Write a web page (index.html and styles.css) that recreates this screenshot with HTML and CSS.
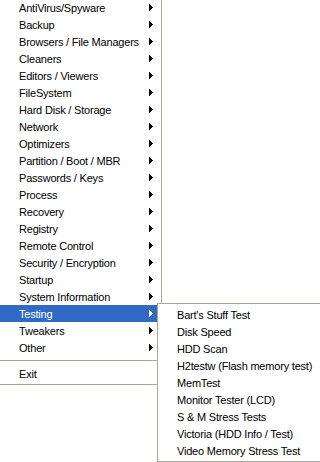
FILE: index.html
```html
<!DOCTYPE html>
<html lang="en">
<head>
    <meta charset="UTF-8">
    <meta name="viewport" content="width=device-width, initial-scale=1.0">
    <title>Tools menu</title>
    <link rel="stylesheet" href="styles.css">
</head>
<body>
    <div class="menu main">
        <div class="item"><span>AntiVirus/Spyware</span><svg class="arrow" width="4" height="7" viewBox="0 0 4 7"><path d="M0 0h1v7h-1zM1 1h1v5h-1zM2 2h1v3h-1zM3 3h1v1h-1z"/></svg></div>
        <div class="item"><span>Backup</span><svg class="arrow" width="4" height="7" viewBox="0 0 4 7"><path d="M0 0h1v7h-1zM1 1h1v5h-1zM2 2h1v3h-1zM3 3h1v1h-1z"/></svg></div>
        <div class="item"><span>Browsers / File Managers</span><svg class="arrow" width="4" height="7" viewBox="0 0 4 7"><path d="M0 0h1v7h-1zM1 1h1v5h-1zM2 2h1v3h-1zM3 3h1v1h-1z"/></svg></div>
        <div class="item"><span>Cleaners</span><svg class="arrow" width="4" height="7" viewBox="0 0 4 7"><path d="M0 0h1v7h-1zM1 1h1v5h-1zM2 2h1v3h-1zM3 3h1v1h-1z"/></svg></div>
        <div class="item"><span>Editors / Viewers</span><svg class="arrow" width="4" height="7" viewBox="0 0 4 7"><path d="M0 0h1v7h-1zM1 1h1v5h-1zM2 2h1v3h-1zM3 3h1v1h-1z"/></svg></div>
        <div class="item"><span>FileSystem</span><svg class="arrow" width="4" height="7" viewBox="0 0 4 7"><path d="M0 0h1v7h-1zM1 1h1v5h-1zM2 2h1v3h-1zM3 3h1v1h-1z"/></svg></div>
        <div class="item"><span>Hard Disk / Storage</span><svg class="arrow" width="4" height="7" viewBox="0 0 4 7"><path d="M0 0h1v7h-1zM1 1h1v5h-1zM2 2h1v3h-1zM3 3h1v1h-1z"/></svg></div>
        <div class="item"><span>Network</span><svg class="arrow" width="4" height="7" viewBox="0 0 4 7"><path d="M0 0h1v7h-1zM1 1h1v5h-1zM2 2h1v3h-1zM3 3h1v1h-1z"/></svg></div>
        <div class="item"><span>Optimizers</span><svg class="arrow" width="4" height="7" viewBox="0 0 4 7"><path d="M0 0h1v7h-1zM1 1h1v5h-1zM2 2h1v3h-1zM3 3h1v1h-1z"/></svg></div>
        <div class="item"><span>Partition / Boot / MBR</span><svg class="arrow" width="4" height="7" viewBox="0 0 4 7"><path d="M0 0h1v7h-1zM1 1h1v5h-1zM2 2h1v3h-1zM3 3h1v1h-1z"/></svg></div>
        <div class="item"><span>Passwords / Keys</span><svg class="arrow" width="4" height="7" viewBox="0 0 4 7"><path d="M0 0h1v7h-1zM1 1h1v5h-1zM2 2h1v3h-1zM3 3h1v1h-1z"/></svg></div>
        <div class="item"><span>Process</span><svg class="arrow" width="4" height="7" viewBox="0 0 4 7"><path d="M0 0h1v7h-1zM1 1h1v5h-1zM2 2h1v3h-1zM3 3h1v1h-1z"/></svg></div>
        <div class="item"><span>Recovery</span><svg class="arrow" width="4" height="7" viewBox="0 0 4 7"><path d="M0 0h1v7h-1zM1 1h1v5h-1zM2 2h1v3h-1zM3 3h1v1h-1z"/></svg></div>
        <div class="item"><span>Registry</span><svg class="arrow" width="4" height="7" viewBox="0 0 4 7"><path d="M0 0h1v7h-1zM1 1h1v5h-1zM2 2h1v3h-1zM3 3h1v1h-1z"/></svg></div>
        <div class="item"><span>Remote Control</span><svg class="arrow" width="4" height="7" viewBox="0 0 4 7"><path d="M0 0h1v7h-1zM1 1h1v5h-1zM2 2h1v3h-1zM3 3h1v1h-1z"/></svg></div>
        <div class="item"><span>Security / Encryption</span><svg class="arrow" width="4" height="7" viewBox="0 0 4 7"><path d="M0 0h1v7h-1zM1 1h1v5h-1zM2 2h1v3h-1zM3 3h1v1h-1z"/></svg></div>
        <div class="item"><span>Startup</span><svg class="arrow" width="4" height="7" viewBox="0 0 4 7"><path d="M0 0h1v7h-1zM1 1h1v5h-1zM2 2h1v3h-1zM3 3h1v1h-1z"/></svg></div>
        <div class="item"><span>System Information</span><svg class="arrow" width="4" height="7" viewBox="0 0 4 7"><path d="M0 0h1v7h-1zM1 1h1v5h-1zM2 2h1v3h-1zM3 3h1v1h-1z"/></svg></div>
        <div class="item active"><span>Testing</span><svg class="arrow" width="4" height="7" viewBox="0 0 4 7"><path d="M0 0h1v7h-1zM1 1h1v5h-1zM2 2h1v3h-1zM3 3h1v1h-1z"/></svg></div>
        <div class="item"><span>Tweakers</span><svg class="arrow" width="4" height="7" viewBox="0 0 4 7"><path d="M0 0h1v7h-1zM1 1h1v5h-1zM2 2h1v3h-1zM3 3h1v1h-1z"/></svg></div>
        <div class="item"><span>Other</span><svg class="arrow" width="4" height="7" viewBox="0 0 4 7"><path d="M0 0h1v7h-1zM1 1h1v5h-1zM2 2h1v3h-1zM3 3h1v1h-1z"/></svg></div>
        <div class="separator"></div>
        <div class="item"><span>Exit</span></div>
    </div>

    <div class="menu sub">
        <div class="item"><span>Bart's Stuff Test</span></div>
        <div class="item"><span>Disk Speed</span></div>
        <div class="item"><span>HDD Scan</span></div>
        <div class="item"><span>H2testw (Flash memory test)</span></div>
        <div class="item"><span>MemTest</span></div>
        <div class="item"><span>Monitor Tester (LCD)</span></div>
        <div class="item"><span>S &amp; M Stress Tests</span></div>
        <div class="item"><span>Victoria (HDD Info / Test)</span></div>
        <div class="item"><span>Video Memory Stress Test</span></div>
    </div>
</body>
</html>
```

FILE: styles.css
```css
body {
    margin: 0;
    background: #fff;
    font-family: 'Liberation Sans', Tahoma, Arial, sans-serif;
    font-size: 11px;
    letter-spacing: -0.2px;
    color: #000;
    position: relative;
    height: 462px;
    overflow: hidden;
}
.menu {
    background: #fff;
    border: 1px solid #aca899;
    box-sizing: border-box;
}
.main {
    width: 162px;
    margin-top: -4px;
    border-left: none;
    padding: 2px 2px 2px 0;
}
.item {
    height: 17px;
    display: flex;
    align-items: center;
    justify-content: space-between;
    padding: 0 6px 0 19px;
    white-space: nowrap;
}
.item .arrow {
    fill: #000;
    display: block;
}
.item.active {
    background: #316ac5;
    color: #fff;
}
.item.active .arrow {
    fill: #fff;
}
.separator {
    height: 1px;
    background: #aca899;
    margin: 4px 0;
}
/* popup submenu sits over the main one */
.sub {
    position: absolute;
    left: 157px;
    top: 303px;
    width: 164px;
    padding: 2px 0;
}
.sub .item {
    padding-left: 19px;
}
```
